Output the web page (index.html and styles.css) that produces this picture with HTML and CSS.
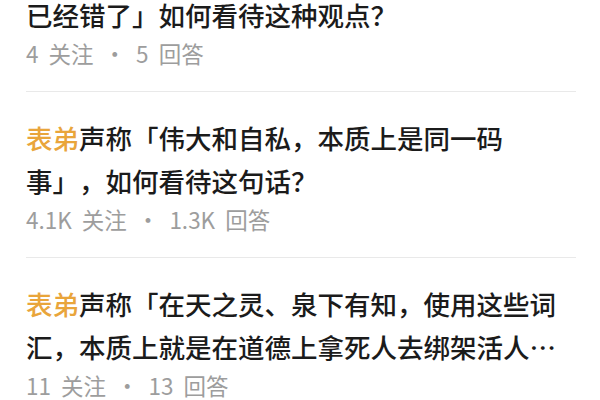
FILE: index.html
```html
<!DOCTYPE html>
<html lang="zh-CN">
<head>
<meta charset="utf-8">
<link rel="stylesheet" href="styles.css">
</head>
<body>
<div class="feed">
  <div class="item first">
    <div class="title">已经错了」如何看待这种观点？</div>
    <div class="meta">4 关注 · 5 回答</div>
  </div>
  <div class="item">
    <div class="title"><span class="hl">表弟</span>声称「伟大和自私，本质上是同一码事」，如何看待这句话？</div>
    <div class="meta">4.1K 关注 · 1.3K 回答</div>
  </div>
  <div class="item">
    <div class="title"><span class="hl">表弟</span>声称「在天之灵、泉下有知，使用这些词汇，本质上就是在道德上拿死人去绑架活人…</div>
    <div class="meta">11 关注 · 13 回答</div>
  </div>
</div>
</body>
</html>
```

FILE: styles.css
```css
html, body {
  margin: 0;
  padding: 0;
  background: #ffffff;
  overflow: hidden;
}
body {
  width: 600px;
  height: 400px;
  font-family: "Noto Sans CJK SC", "Noto Sans", sans-serif;
}
.feed {
  margin-top: -7px;
  padding: 0 24px 0 26px;
}
.item {
  padding: 24px 0 23px;
  border-bottom: 1px solid #e9e9e9;
}
.item.first {
  padding-top: 0;
}
.title {
  font-size: 26.5px;
  line-height: 43px;
  font-weight: 500;
  color: #1b1b1b;
  text-spacing-trim: space-all;
}
.hl {
  color: #e9a53b;
}
.meta {
  margin-top: 2px;
  font-size: 22.5px;
  line-height: 30px;
  word-spacing: 5px;
  color: #9d9d9d;
  text-spacing-trim: space-all;
}
```
